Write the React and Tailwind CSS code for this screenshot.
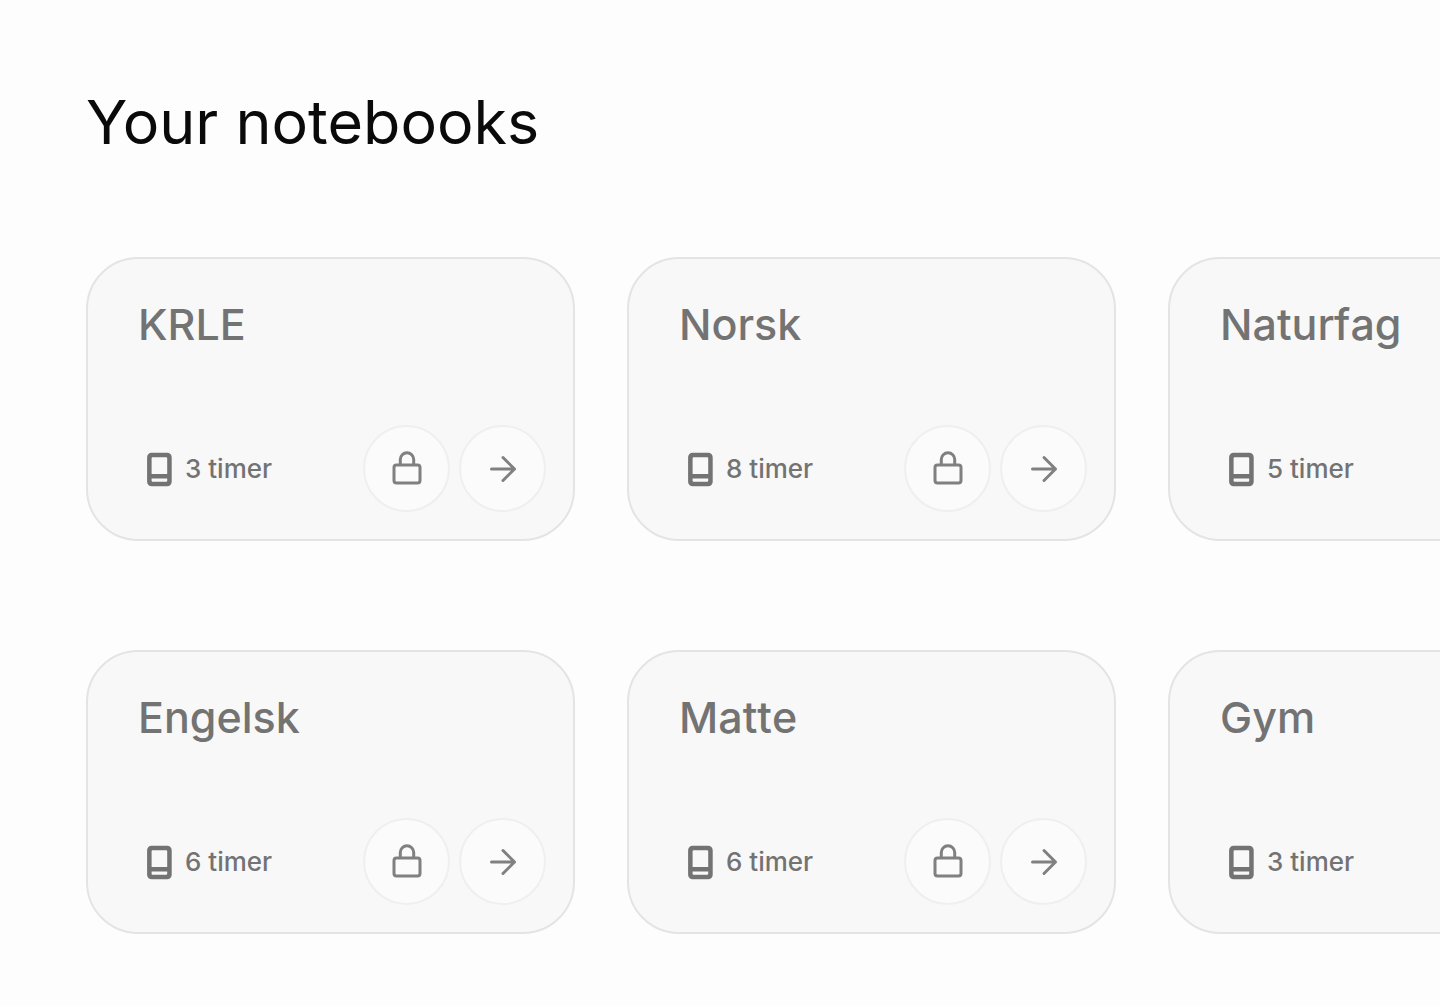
import React from 'react';

const notebooks = [
  { name: 'KRLE', hours: 3 },
  { name: 'Norsk', hours: 8 },
  { name: 'Naturfag', hours: 5 },
  { name: 'Engelsk', hours: 6 },
  { name: 'Matte', hours: 6 },
  { name: 'Gym', hours: 3 },
];

const BookIcon = () => (
  <svg viewBox="0 0 26 36" className="w-[26px] h-9 shrink-0" fill="currentColor" aria-hidden="true">
    <path
      fillRule="evenodd"
      d="M5.6 1.8h15.6a4.5 4.5 0 0 1 4.5 4.5v24.4a4.5 4.5 0 0 1-4.5 4.5H5.6a4.5 4.5 0 0 1-4.5-4.5V6.3a4.5 4.5 0 0 1 4.5-4.5ZM6.6 6.2a1 1 0 0 0-1 1V23h15.6V7.2a1 1 0 0 0-1-1ZM5.6 27.5v2.3a1 1 0 0 0 1 1h13.6a1 1 0 0 0 1-1v-2.3Z"
    />
  </svg>
);

const LockIcon = () => (
  <svg viewBox="0 0 30 36" className="w-[30px] h-9" fill="none" stroke="currentColor" strokeWidth="3" aria-hidden="true">
    <rect x="2" y="14" width="26" height="18" rx="2.5" />
    <path d="M8.3 14V8.5a6.7 6.7 0 0 1 13.4 0V14" />
  </svg>
);

const ArrowIcon = () => (
  <svg
    viewBox="0 0 28 28"
    className="w-7 h-7"
    fill="none"
    stroke="currentColor"
    strokeWidth="3"
    strokeLinecap="round"
    strokeLinejoin="round"
    aria-hidden="true"
  >
    <path d="M2.5 14h23M14 2.5 25.5 14 14 25.5" />
  </svg>
);

const RoundButton = ({ label, children }) => (
  <button
    type="button"
    aria-label={label}
    className="w-[87px] h-[87px] shrink-0 flex items-center justify-center rounded-full border-2 border-[#efefef] bg-[#fbfbfb] text-[#808080]"
  >
    {children}
  </button>
);

const NotebookCard = ({ name, hours }) => (
  <article className="flex flex-col justify-between h-[284px] rounded-[52px] border-2 border-[#e4e4e4] bg-[#f8f8f8] pt-10 pb-[27px] pl-[50px] pr-[27px] text-[#737373]">
    <h2 className="text-[43px] leading-[50px] font-medium [font-kerning:none]">{name}</h2>
    <div className="flex items-center justify-between">
      <div className="flex items-center gap-[13px] pl-2">
        <BookIcon />
        <span className="text-[26px] leading-8 font-medium">{hours} timer</span>
      </div>
      <div className="flex gap-[9px]">
        <RoundButton label={`Lock ${name}`}>
          <LockIcon />
        </RoundButton>
        <RoundButton label={`Open ${name}`}>
          <ArrowIcon />
        </RoundButton>
      </div>
    </div>
  </article>
);

export default function App() {
  return (
    <main className="min-h-screen overflow-hidden bg-[#fdfdfd] pt-[84px] pb-[72px] pl-[86px] font-['Inter',sans-serif]">
      <h1 className="text-[61px] leading-[76px] text-[#0a0a0a]">Your notebooks</h1>
      <div className="mt-[97px] grid grid-cols-[repeat(3,489px)] gap-x-[52px] gap-y-[109px]">
        {notebooks.map((notebook) => (
          <NotebookCard key={notebook.name} name={notebook.name} hours={notebook.hours} />
        ))}
      </div>
    </main>
  );
}
